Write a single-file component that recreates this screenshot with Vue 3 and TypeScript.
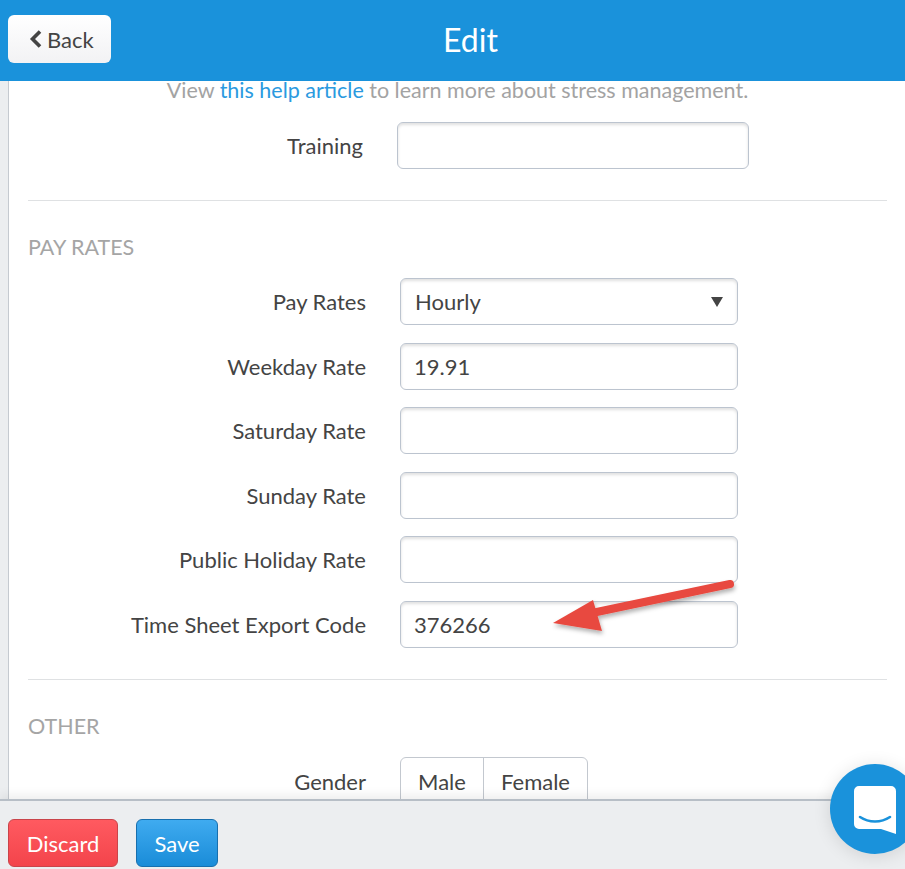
<template>
  <div class="page">
    <header class="topbar">
      <button class="back">
        <svg class="chev" viewBox="0 0 14 20" width="14" height="20"><path d="M11 2.5 3.5 10l7.5 7.5" fill="none" stroke="#444" stroke-width="3.6" /></svg>
        <span>Back</span>
      </button>
      <h1>Edit</h1>
    </header>

    <main class="main">
      <div class="content">
        <p class="help">View <a>this help article</a> to learn more about stress management.</p>
        <div class="row training">
          <label>Training</label>
          <div class="field"></div>
        </div>
        <hr />

        <h2>PAY RATES</h2>
        <div class="rows">
          <div v-for="r in rates" :key="r.label" class="row">
            <label>{{ r.label }}</label>
            <div class="field" :class="{ select: r.select }">
              <span>{{ r.value }}</span>
              <svg v-if="r.select" viewBox="0 0 12 10" width="12" height="10"><path d="M0 0h12L6 10z" fill="#444" /></svg>
            </div>
          </div>
        </div>
        <hr class="second" />

        <h2>OTHER</h2>
        <div class="row gender">
          <label>Gender</label>
          <div class="seg">
            <span class="male">Male</span>
            <span class="female">Female</span>
          </div>
        </div>
      </div>
    </main>

    <footer class="bottombar">
      <button class="btn discard">Discard</button>
      <button class="btn save">Save</button>
    </footer>

    <!-- annotation arrow over the export code field -->
    <svg class="arrow" viewBox="0 0 200 60" width="200" height="60">
      <defs>
        <filter id="shadow" x="-10%" y="-30%" width="120%" height="170%">
          <feDropShadow dx="1" dy="3" stdDeviation="2" flood-color="#000" flood-opacity="0.3" />
        </filter>
      </defs>
      <g filter="url(#shadow)">
        <path d="M178 5 40 34" stroke="#e8493f" stroke-width="8" stroke-linecap="round" fill="none" />
        <path d="M1 44 41 21 50 52z" fill="#e8493f" />
      </g>
    </svg>

    <div class="chat">
      <svg viewBox="0 0 42 48" width="42" height="48">
        <path d="M5 0h32a5 5 0 0 1 5 5v43l-15-5H5a5 5 0 0 1-5-5V5a5 5 0 0 1 5-5z" fill="#fff" />
        <path d="M6 31c9 6 21 6 30 0" fill="none" stroke="#1a92db" stroke-width="2.6" stroke-linecap="round" />
      </svg>
    </div>
  </div>
</template>

<script setup lang="ts">
interface Rate {
  label: string
  value: string
  select?: boolean
}

const rates: Rate[] = [
  { label: 'Pay Rates', value: 'Hourly', select: true },
  { label: 'Weekday Rate', value: '19.91' },
  { label: 'Saturday Rate', value: '' },
  { label: 'Sunday Rate', value: '' },
  { label: 'Public Holiday Rate', value: '' },
  { label: 'Time Sheet Export Code', value: '376266' },
]
</script>

<style>
html,
body {
  margin: 0;
  background: #fff;
}
</style>

<style scoped>
.page {
  position: relative;
  width: 905px;
  height: 869px;
  overflow: hidden;
  display: flex;
  flex-direction: column;
  font-family: Lato, "Open Sans", sans-serif;
  color: #444;
  background: #fff;
}

.topbar {
  height: 81px;
  flex: none;
  background: #1a92db;
  display: flex;
  align-items: center;
  padding: 0 0 3px 8px;
  box-sizing: border-box;
  z-index: 2;
}
.topbar h1 {
  margin: 0 0 0 332px;
  font-size: 32px;
  font-weight: 400;
  color: #fff;
}
.back {
  width: 103px;
  height: 48px;
  padding: 0 0 0 21px;
  display: flex;
  align-items: center;
  gap: 4px;
  border: 0;
  border-radius: 6px;
  background: linear-gradient(#fff, #f2f2f4);
  font: 400 22px Lato, sans-serif;
  color: #444;
}

.main {
  flex: 1;
  min-height: 0;
  overflow: hidden;
  background: #eceef0;
  padding-left: 8px;
}
.content {
  height: 100%;
  box-sizing: border-box;
  background: #fff;
  border-left: 1px solid #c5cad0;
  padding: 0 18px 0 19px;
}
.help {
  margin: 0;
  padding-top: -1px;
  height: 41px;
  line-height: 19px;
  font-size: 21.5px;
  text-align: center;
  color: #a3a3a3;
}
.help a {
  color: #2a9ae0;
}

.row {
  display: flex;
  align-items: center;
  font-size: 22px;
}
.row label {
  width: 338px;
  text-align: right;
  flex: none;
}
.field {
  box-sizing: border-box;
  width: 338px;
  height: 47px;
  margin-left: 34px;
  padding: 0 13px;
  display: flex;
  align-items: center;
  justify-content: space-between;
  border: 1px solid #bcc4cf;
  border-radius: 6px;
  background: #fff;
  box-shadow: inset 0 2px 3px rgba(0, 0, 0, 0.12);
}
.select {
  padding: 0 14px 0 14px;
}
.training label {
  width: 335px;
}
.training .field {
  width: 352px;
}

hr {
  margin: 31px 0 0;
  border: 0;
  border-top: 1px solid #dfe1e3;
}
hr.second {
  margin-top: 31px;
}

h2 {
  margin: 33px 0 0;
  height: 27px;
  line-height: 27px;
  font-size: 21.5px;
  font-weight: 400;
  color: #a5a5a5;
}

.rows {
  margin-top: 17px;
  display: flex;
  flex-direction: column;
  gap: 17.5px;
}

.gender {
  margin-top: 17px;
  align-items: flex-start;
}
.gender label {
  padding-top: 11px;
}
.seg {
  margin-left: 34px;
  height: 60px;
  display: flex;
  border: 1px solid #c3c8cf;
  border-radius: 6px 6px 0 0;
}
.seg span {
  box-sizing: border-box;
  height: 48px;
  line-height: 48px;
  text-align: center;
}
.male {
  width: 83px;
  border-right: 1px solid #c3c8cf;
}
.female {
  width: 103px;
}

.bottombar {
  height: 70px;
  flex: none;
  box-sizing: border-box;
  background: #eceef0;
  border-top: 2px solid #b7bec6;
  box-shadow: 0 -4px 10px rgba(0, 0, 0, 0.07);
  padding: 18px 0 0 8px;
  display: flex;
  align-items: flex-start;
  gap: 18px;
  z-index: 2;
}
.btn {
  height: 48px;
  border-radius: 6px;
  font: 400 22px Lato, sans-serif;
  color: #fff;
  padding: 0;
}
.discard {
  width: 110px;
  background: linear-gradient(#ff5a60, #f3444b);
  border: 1px solid #c9444a;
}
.save {
  width: 82px;
  background: linear-gradient(#3fabf0, #1a8cd8);
  border: 1px solid #176fae;
}

.arrow {
  position: absolute;
  left: 552px;
  top: 579px;
  z-index: 3;
}
.chat {
  position: absolute;
  left: 830px;
  top: 764px;
  width: 90px;
  height: 90px;
  border-radius: 50%;
  background: #1a92db;
  box-shadow: 0 2px 18px rgba(0, 0, 0, 0.12);
  z-index: 4;
  box-sizing: border-box;
  padding: 22px 0 0 24px;
}
.chat svg {
  display: block;
}
</style>
